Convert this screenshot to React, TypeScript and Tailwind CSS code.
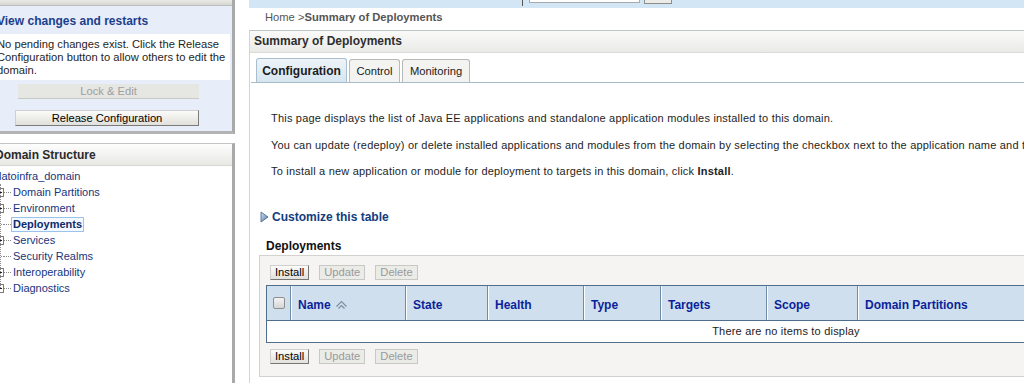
import React from 'react';

const font = { fontFamily: '"Liberation Sans", Arial, sans-serif' };

const treeItems = [
  { label: 'Domain Partitions', expand: true },
  { label: 'Environment', expand: true },
  { label: 'Deployments', expand: false, active: true },
  { label: 'Services', expand: true },
  { label: 'Security Realms', expand: false },
  { label: 'Interoperability', expand: true },
  { label: 'Diagnostics', expand: true },
];

const columns = [
  { label: 'Name', w: 'w-[115px]', sort: true },
  { label: 'State', w: 'w-[82px]' },
  { label: 'Health', w: 'w-[96px]' },
  { label: 'Type', w: 'w-[77px]' },
  { label: 'Targets', w: 'w-[106px]' },
  { label: 'Scope', w: 'w-[91px]' },
  { label: 'Domain Partitions', w: 'w-[446px]' },
];

const PlusBox = () => (
  <svg width="9" height="9" viewBox="0 0 9 9" className="shrink-0">
    <rect x="0.5" y="0.5" width="8" height="8" fill="#fff" stroke="#7a7a7a" />
    <path d="M2 4.5h5M4.5 2v5" stroke="#222" />
  </svg>
);

const SortIcon = () => (
  <svg width="13" height="10" viewBox="0 0 13 10" className="ml-1">
    <path d="M1.5 6.5l5-5 5 5" fill="none" stroke="#7d8ea3" strokeWidth="1.2" />
    <path d="M3.5 8.5l3-3 3 3" fill="none" stroke="#7d8ea3" strokeWidth="1.2" />
  </svg>
);

const Btn = ({ label, disabled }: { label: string; disabled?: boolean }) => (
  <button
    className={
      disabled
        ? 'h-[15px] px-[4px] text-[11.2px] leading-[13px] text-[#9a9a9a] border border-[#c8c8c4] bg-[#ebebe7]'
        : 'h-[15px] px-[4px] text-[11.2px] leading-[13px] text-black border border-[#777] border-t-[#cfcfcf] border-l-[#cfcfcf] bg-gradient-to-b from-[#fbfbf9] to-[#e2e1dc]'
    }
  >
    {label}
  </button>
);

const ButtonRow = () => (
  <div className="flex gap-[10px] pl-[10px]">
    <Btn label="Install" />
    <Btn label="Update" disabled />
    <Btn label="Delete" disabled />
  </div>
);

export default function App() {
  return (
    <div className="w-[1024px] h-[383px] overflow-hidden flex bg-white text-[#222]" style={font}>
      {/* left column */}
      <div className="w-[236px] shrink-0 flex flex-col">
        <div className="h-[134px] bg-[#e7edf9] border-r-[3px] border-b-[3px] border-r-[#a9a9a9] border-b-[#b4b4b4] w-[235px] overflow-hidden">
          <div className="h-[6px] bg-gradient-to-b from-[#e8e8e6] to-[#d6d6d2] border-b border-[#bdbdbd]" />
          <div className="ml-[-3px] mt-[8px] text-[12px] font-bold text-[#1c3f8c] leading-[14px] whitespace-nowrap">View changes and restarts</div>
          <div className="mt-[6px] bg-white w-[230px] h-[46px] pt-[4px] overflow-hidden">
            <p className="ml-[-3px] w-[236px] text-[11.2px] leading-[13px] text-[#1e1e1e]">
              No pending changes exist. Click the Release Configuration button to allow others to edit the domain.
            </p>
          </div>
          <div className="mt-[4px] ml-[18px] w-[181px] h-[15px] bg-[#e6e6e2] border-b border-[#c9c9c5] text-center text-[11.2px] leading-[14px] text-[#a0a0a0]">
            Lock &amp; Edit
          </div>
          <div className="mt-[11px] ml-[15px] w-[184px] h-[16px] border border-[#7b7b7b] border-t-[#cfcfcf] border-l-[#cfcfcf] bg-gradient-to-b from-[#fbfbf9] to-[#e1e0db] text-center text-[11.2px] leading-[14px] text-black">
            Release Configuration
          </div>
        </div>
        <div className="mt-[9px] flex-1 border-t border-[#c4c4c4] border-r-[3px] border-r-[#a9a9a9] w-[235px]">
          <div className="h-[22px] bg-gradient-to-b from-[#fdfdfd] to-[#e8e8e5] border-b border-[#d6d6d2] flex items-center overflow-hidden">
            <span className="ml-[-5px] text-[12px] font-bold text-[#2a2a2a] whitespace-nowrap">Domain Structure</span>
          </div>
          <div className="pt-[2px] text-[11px] text-[#17367c] overflow-hidden">
            <div className="h-[16px] leading-[16px] ml-[-1px]">latoinfra_domain</div>
            <div className="relative">
              <div className="absolute left-0 top-0 bottom-[8px] border-l border-dotted border-[#8a8a8a]" />
              {treeItems.map((t) => (
                <div key={t.label} className="h-[16px] flex items-center ml-[-5px]">
                  {t.expand ? <PlusBox /> : <span className="w-[9px] border-t border-dotted border-[#8a8a8a]" />}
                  <span className="w-[7px] border-t border-dotted border-[#8a8a8a]" />
                  {t.active ? (
                    <span className="px-[1px] font-bold text-[#0f2a6a] border border-[#99c2ec] bg-[#f4f9ff] leading-[13px]">
                      {t.label}
                    </span>
                  ) : (
                    <span className="ml-[2px]">{t.label}</span>
                  )}
                </div>
              ))}
            </div>
          </div>
        </div>
      </div>

      {/* right column */}
      <div className="ml-[13px] flex-1 flex flex-col">
        <div className="h-[8px] bg-[#d3e6f6] flex items-start">
          <span className="ml-[273px] w-px h-[6px] bg-[#555]" />
          <span className="ml-[6px] w-[111px] h-[3px] bg-white border border-t-0 border-[#a9a9a9]" />
          <span className="ml-[4px] w-[28px] h-[4px] bg-[#ecebe6] border border-t-0 border-[#8d8d8d]" />
        </div>
        <div className="h-[22px] pl-[16px] pt-[2px] text-[11.2px] leading-[14px] text-[#555]">
          Home &gt;<span className="font-bold text-[#555]">Summary of Deployments</span>
        </div>
        <div className="w-[1100px] border-t border-l border-[#bfc6c6] border-l-[#d4d4d4] flex-1">
          <div className="h-[22px] bg-gradient-to-b from-[#fafafa] to-[#eaeae7] border-b border-[#dadad6] pl-[4px] pt-[3px]">
            <div className="text-[12px] leading-[14px] font-bold text-[#2e2e2e]">Summary of Deployments</div>
          </div>
          <div className="mt-[6px] ml-[1px] flex items-end gap-[2px] border-b border-[#a6bccb] h-[24px] pl-[5px]">
            <div className="h-[24px] w-[91px] rounded-t-[3px] border border-b-0 border-[#a9bfcf] bg-gradient-to-b from-[#eef4f8] to-[#d6e5ef] flex items-center justify-center text-[12px] font-bold text-[#1b1b1b]">
              Configuration
            </div>
            <div className="h-[23px] w-[51px] rounded-t-[3px] border border-b-0 border-[#b9b9b9] bg-[#f3f3f1] flex items-center justify-center text-[11.2px] text-[#1b1b1b]">
              Control
            </div>
            <div className="h-[23px] w-[68px] rounded-t-[3px] border border-b-0 border-[#b9b9b9] bg-[#f3f3f1] flex items-center justify-center text-[11.2px] text-[#1b1b1b]">
              Monitoring
            </div>
          </div>
          <div className="pl-[21px] pt-[28px] text-[11px] tracking-[0.2px] leading-[14px] text-[#1e1e1e]">
            <p>This page displays the list of Java EE applications and standalone application modules installed to this domain.</p>
            <p className="mt-[13px] whitespace-nowrap">
              You can update (redeploy) or delete installed applications and modules from the domain by selecting the checkbox next to the application name and then using the controls on this page.
            </p>
            <p className="mt-[12px]">
              To install a new application or module for deployment to targets in this domain, click <b>Install</b>.
            </p>
          </div>
          <div className="mt-[30px] ml-[10px] flex items-center gap-[3px]">
            <svg width="9" height="12" viewBox="0 0 9 12">
              <defs>
                <linearGradient id="tri" x1="0" y1="0" x2="1" y2="1">
                  <stop offset="0" stopColor="#d7e4f2" />
                  <stop offset="1" stopColor="#4d77a8" />
                </linearGradient>
              </defs>
              <path d="M1 1l7 5-7 5z" fill="url(#tri)" stroke="#3a5f8c" strokeWidth="0.8" />
            </svg>
            <span className="text-[12px] font-bold text-[#123d7e]">Customize this table</span>
          </div>
          <div className="mt-[13px] ml-[16px] text-[12px] font-bold text-[#111] leading-[14px]">Deployments</div>
          <div className="mt-[2px] ml-[9px] h-[122px] bg-[#f5f4f2] border border-[#d3d2ce] pt-[9px]">
            <ButtonRow />
            <div className="ml-[6px] mt-[5px] border border-[#4f6e8d] bg-white w-[1040px]">
              <div className="flex h-[35px] bg-[#cfdfed] border-b border-[#4f6e8d]">
                <div className="w-[24px] flex items-center justify-center border-r border-[#6e8ba8]">
                  <span className="w-[12px] h-[12px] rounded-[2px] border border-[#8f8f8f] bg-gradient-to-b from-[#f3f3f3] to-[#d6d6d6]" />
                </div>
                {columns.map((c) => (
                  <div
                    key={c.label}
                    className={`${c.w} flex items-center pl-[6px] pt-[3px] border-r border-[#6e8ba8] border-l border-l-white text-[12px] font-bold text-[#0c1f9a]`}
                  >
                    {c.label}
                    {c.sort && <SortIcon />}
                  </div>
                ))}
              </div>
              <div className="h-[21px] flex items-center justify-center text-[11px] tracking-[0.2px] text-[#222]">There are no items to display</div>
            </div>
            <div className="mt-[6px]">
              <ButtonRow />
            </div>
          </div>
        </div>
      </div>
    </div>
  );
}
